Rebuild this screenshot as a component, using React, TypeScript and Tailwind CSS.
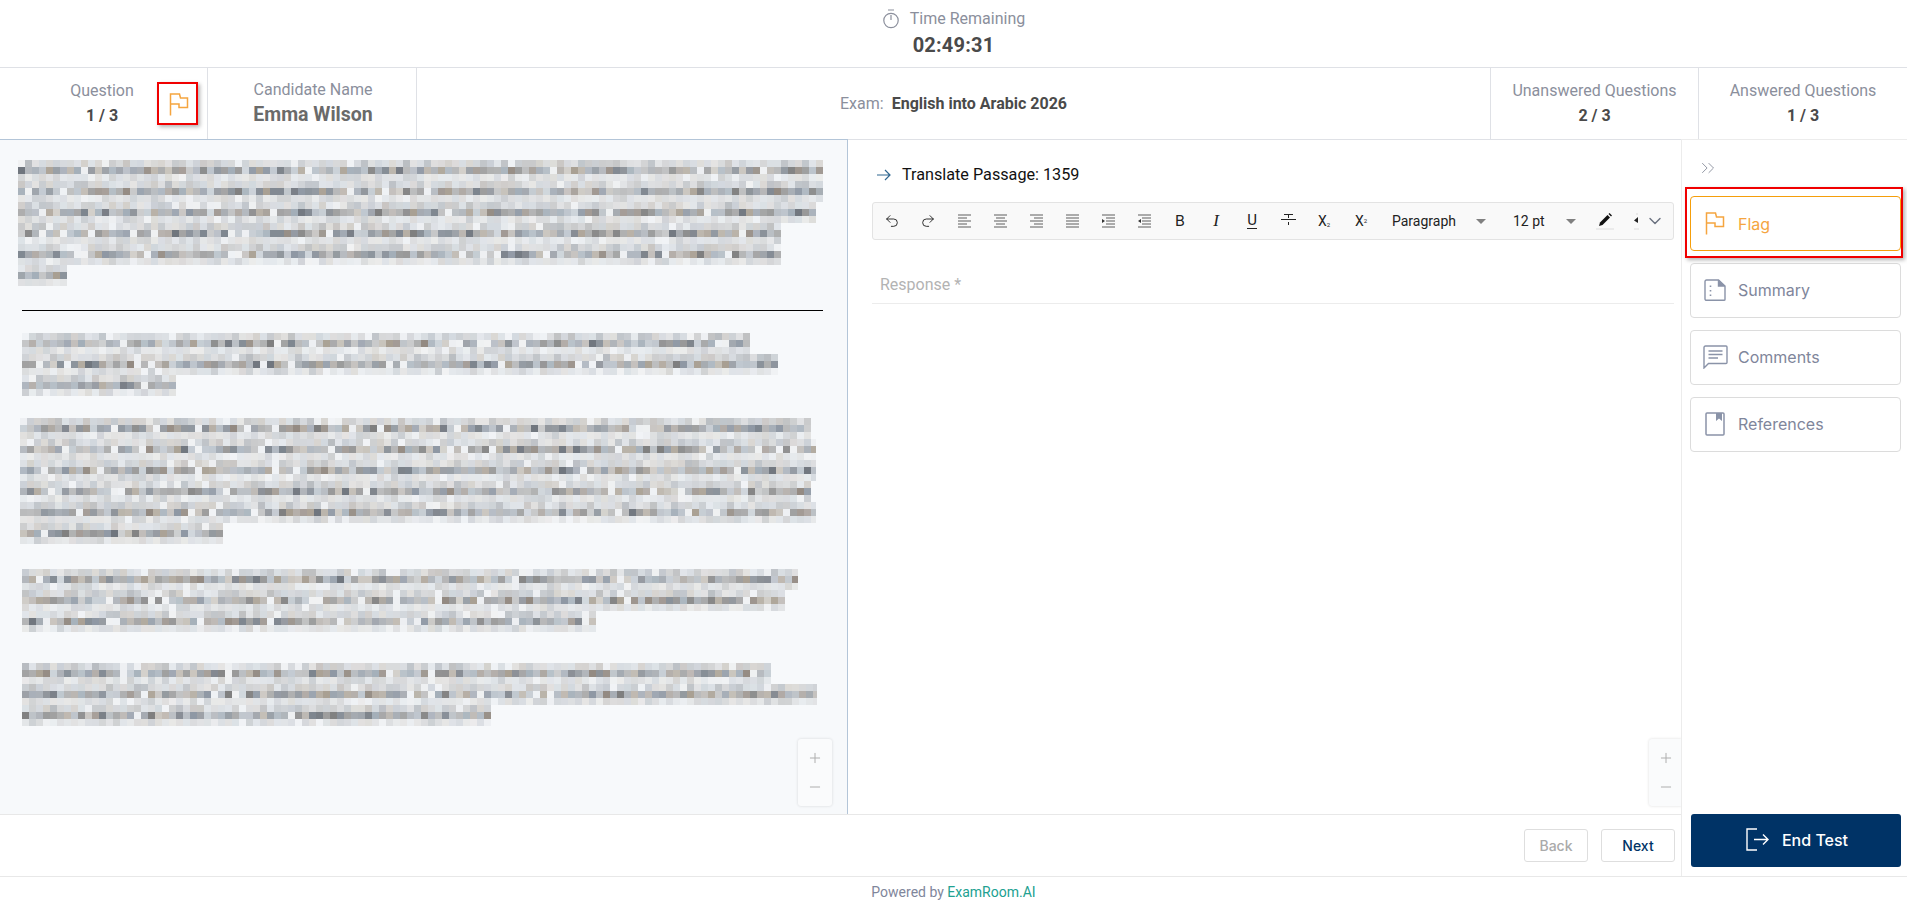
import { ChevronDown, ChevronsRight, Minus, Plus, Redo2, Undo2 } from "lucide-react";
import type { ReactNode } from "react";

const ROBOTO = "font-['Roboto',sans-serif]";
const INTER = "font-['Inter',sans-serif]";

const TINTS = ["#7f7f7f", "#8f98a4", "#a89f92", "#70767e", "#a3aeb8", "#938a82", "#999999", "#7d858e"];

// redacted passage text: a fixed mosaic, seeded so every render is the same
function Mosaic({ widths, seed, className }: { widths: number[]; seed: number; className?: string }) {
  let s = seed;
  const rand = () => {
    s = (s * 16807) % 2147483647;
    return (s - 1) / 2147483646;
  };
  const cell = 7;
  const rects: ReactNode[] = [];
  widths.forEach((w, line) => {
    const cols = Math.ceil(w / cell);
    for (let row = 0; row < 3; row++) {
      const base = row === 1 ? 0.78 : row === 0 ? 0.36 : 0.25;
      for (let c = 0; c < cols; c++) {
        const gap = rand() < 0.07;
        const op = gap ? 0.07 : base * (0.55 + rand() * 0.75);
        const fill = TINTS[Math.floor(rand() * TINTS.length)];
        rects.push(
          <rect key={`${line}-${row}-${c}`} x={c * cell} y={line * 21 + row * cell} width={cell} height={cell} fill={fill} fillOpacity={op} />,
        );
      }
    }
  });
  return (
    <svg className={className} width={Math.max(...widths)} height={widths.length * 21} shapeRendering="crispEdges">
      {rects}
    </svg>
  );
}

function FlagIcon({ className }: { className?: string }) {
  return (
    <svg className={className} viewBox="0 0 20 23" fill="none" stroke="currentColor" strokeWidth="1.5">
      <path d="M1.5 22.5V1H10.5L11.5 5H18.5V14.5H10V11H1.5" />
    </svg>
  );
}

function SummaryIcon() {
  return (
    <svg width="22" height="22" viewBox="0 0 22 22" fill="none" stroke="#8a93a8" strokeWidth="1.4">
      <path d="M2.5 1H14.5L21 7V20.5C21 21 20.5 21.3 20 21.3H2.5C1.6 21.3 1 20.7 1 20V2.5C1 1.6 1.6 1 2.5 1Z" />
      <path d="M14.5 1V7H21" fill="#8a93a8" />
      <path d="M6.5 6.5V8M6.5 11V12.5M6.5 15.5V17" strokeWidth="1.6" />
    </svg>
  );
}

function CommentsIcon() {
  return (
    <svg width="25" height="24" viewBox="0 0 25 24" fill="none" stroke="#8a93a8" strokeWidth="1.4">
      <path d="M1 23V2.5C1 1.6 1.6 1 2.5 1H23C23.6 1 24 1.4 24 2V17.5C24 18.1 23.6 18.5 23 18.5H5.5L1 23Z" />
      <path d="M5.5 6H19.5M5.5 9.5H19.5M5.5 13H15" />
    </svg>
  );
}

function ReferencesIcon() {
  return (
    <svg width="20" height="24" viewBox="0 0 20 24" fill="none" stroke="#8a93a8" strokeWidth="1.5">
      <rect x="1" y="1" width="18" height="22" rx="1" />
      <path d="M11 1H17V9L14 6.5L11 9Z" fill="#8a93a8" stroke="none" />
    </svg>
  );
}

function AlignBars({ lines }: { lines: string[] }) {
  return (
    <div className="flex flex-col gap-px">
      {lines.map((c, i) => (
        <div key={i} className={`h-[2px] bg-[#ababab] ${c}`} />
      ))}
    </div>
  );
}

function AlignIcon({ align }: { align: "left" | "center" | "right" | "full" }) {
  const side = align === "left" ? "mr-auto" : align === "right" ? "ml-auto" : align === "center" ? "mx-auto" : "";
  const short = align === "full" ? "w-[13px]" : `w-[9px] ${side}`;
  return (
    <div className="w-[13px]">
      <AlignBars lines={["w-[13px]", short, "w-[13px]", short, "w-[13px]"]} />
    </div>
  );
}

function IndentIcon({ out }: { out?: boolean }) {
  const s = "w-[9px] ml-auto";
  return (
    <div className="relative w-[13px]">
      <AlignBars lines={["w-[13px]", s, s, s, "w-[13px]"]} />
      <svg className="absolute left-0 top-[5px]" width="3" height="4" viewBox="0 0 3 4">
        <path d={out ? "M3 0V4L0 2Z" : "M0 0V4L3 2Z"} fill="#333" />
      </svg>
    </div>
  );
}

function Tool({ children }: { children: ReactNode }) {
  return <div className="flex h-full w-9 shrink-0 items-center justify-center text-[#222]">{children}</div>;
}

function Caret() {
  return <div className="h-0 w-0 border-x-[5px] border-t-[5px] border-x-transparent border-t-[#808080]" />;
}

function Toolbar() {
  return (
    <div className={`flex h-[38px] items-center overflow-hidden rounded-[3px] border border-[#e3e3e3] bg-[#f9f9f9] pl-px ${ROBOTO}`}>
      <Tool><Undo2 size={16} strokeWidth={1.4} /></Tool>
      <Tool><Redo2 size={16} strokeWidth={1.4} /></Tool>
      <Tool><AlignIcon align="left" /></Tool>
      <Tool><AlignIcon align="center" /></Tool>
      <Tool><AlignIcon align="right" /></Tool>
      <Tool><AlignIcon align="full" /></Tool>
      <Tool><IndentIcon /></Tool>
      <Tool><IndentIcon out /></Tool>
      <Tool><span className={`text-[15px] ${INTER}`}>B</span></Tool>
      <Tool><span className="font-['Liberation_Serif',serif] text-[17px] italic">I</span></Tool>
      <Tool><span className="border-b border-[#222] text-[15px] leading-[15px]">U</span></Tool>
      <Tool>
        <div className="relative flex h-[14px] w-[15px] flex-col items-center">
          <div className="h-px w-[9px] bg-[#222]" />
          <div className="h-[3px] w-px bg-[#222]" />
          <div className="mt-px h-px w-[15px] bg-[#222]" />
          <div className="mt-[2px] h-[3px] w-px bg-[#222]" />
        </div>
      </Tool>
      <Tool><span className="text-[14px]">X<sub className="text-[6px]">2</sub></span></Tool>
      <Tool><span className="pl-[2px] text-[14px]">X<sup className="text-[6px]">2</sup></span></Tool>
      <span className="ml-[14px] w-[84px] shrink-0 text-[14px] text-[#222]">Paragraph</span>
      <Caret />
      <span className="ml-[27px] w-[47px] shrink-0 whitespace-nowrap text-[14px] text-[#222]">12 pt</span>
      <div className="ml-[6px]"><Caret /></div>
      <div className="ml-[20px] flex w-[18px] flex-col items-center">
        <svg width="14" height="14" viewBox="0 0 14 14">
          <path d="M1 13L2 9.5L9.5 2L12 4.5L4.5 12Z" fill="#111" />
          <path d="M10.5 1L11.5 0L14 2.5L13 3.5Z" fill="#111" />
        </svg>
        <div className="mt-[1px] h-[2px] w-[18px] bg-[#ebebeb]" />
      </div>
      <div className="ml-[20px] flex w-[5px] flex-col items-start">
        <svg width="4" height="14" viewBox="0 0 4 14">
          <path d="M4 4L0 7.5L4 10Z" fill="#222" />
          <path d="M3 0.5V1.5" stroke="#bbb" />
        </svg>
        <div className="mt-[1px] h-[2px] w-[5px] bg-[#ebebeb]" />
      </div>
      <ChevronDown className="ml-[6px] shrink-0 text-[#6b7280]" size={20} strokeWidth={1.7} />
    </div>
  );
}

function Stat({ label, value, className }: { label: string; value: string; className: string }) {
  return (
    <div className={`flex flex-col items-center justify-center pb-[2px] ${className}`}>
      <span className="text-[16px] leading-[20px] text-[#8b8f9c]">{label}</span>
      <span className="mt-[5px] text-[16px] font-bold leading-[19px] text-[#4a4a4a]">{value}</span>
    </div>
  );
}

function ZoomControl({ className }: { className: string }) {
  return (
    <div className={`absolute flex h-[67px] flex-col items-center justify-around rounded-[3px] bg-[#fafbfc] py-[4px] text-[#aeaeae] shadow-[0_0_3px_rgba(0,0,0,0.14)] ${className}`}>
      <Plus size={16} strokeWidth={1.5} />
      <Minus size={16} strokeWidth={1.5} />
    </div>
  );
}

function SideButton({ icon, label, className }: { icon: ReactNode; label: string; className?: string }) {
  return (
    <button className={`flex h-[55px] w-[211px] items-center rounded-[4px] border border-[#dcdcdc] bg-white text-[16px] text-[#7f869b] ${className ?? ""}`}>
      <span className="flex w-[47px] shrink-0 justify-center pl-[1px]">{icon}</span>
      <span>{label}</span>
    </button>
  );
}

export default function App() {
  return (
    <div className={`flex h-[908px] w-[1907px] flex-col overflow-hidden bg-white ${ROBOTO}`}>
      {/* timer */}
      <div className="flex h-[68px] shrink-0 flex-col items-center border-b border-[#dfe1e6] pt-[8px]">
        <div className="flex h-[22px] items-center gap-[10px] text-[16px] text-[#8b8f9c]">
          <svg width="18" height="20" viewBox="0 0 18 20" fill="none" stroke="#8b8f9c" strokeWidth="1.2">
            <circle cx="9" cy="11.5" r="7.2" />
            <path d="M6 1H12M9 6V11" />
          </svg>
          <span>Time Remaining</span>
        </div>
        <span className="mt-[3px] text-[20px] font-bold leading-[24px] tracking-[0.2px] text-[#4a4a4a]">02:49:31</span>
      </div>

      {/* exam info */}
      <div className="flex h-[71px] shrink-0">
        <div className="flex w-[208px] shrink-0 items-center border-r border-[#dfe1e6] pl-[62px]">
          <Stat label="Question" value="1 / 3" className="w-[80px]" />
          <div className="relative ml-[15px] flex h-[43px] w-[41px] items-center justify-center border-[2px] border-[#f00000] pl-[3px] pt-[2px] text-[#f5a53f] shadow-[2px_2px_4px_rgba(0,0,0,0.3)]">
            <FlagIcon className="h-[23px] w-[20px]" />
          </div>
        </div>
        <div className="flex w-[209px] shrink-0 flex-col items-center justify-center border-r border-[#dfe1e6] pb-[2px] pl-[2px]">
          <span className="text-[16px] leading-[20px] text-[#8b8f9c]">Candidate Name</span>
          <span className="mt-[4px] text-[19.5px] font-bold leading-[21px] text-[#6a6a6a]">Emma Wilson</span>
        </div>
        <div className="flex flex-1 items-center justify-center text-[16px]">
          <span className="text-[#8b8f9c]">Exam:</span>
          <span className="ml-[8px] font-bold text-[#4a4a4a]">English into Arabic 2026</span>
        </div>
        <Stat label="Unanswered Questions" value="2 / 3" className="w-[209px] border-x border-[#dfe1e6]" />
        <Stat label="Answered Questions" value="1 / 3" className="w-[208px]" />
      </div>

      <div className="flex min-h-0 flex-1">
        <div className="flex min-w-0 flex-1 flex-col">
          <div className="flex min-h-0 flex-1 border-t border-[#dfe1e6]">
            {/* passage */}
            <div className="relative -mt-px w-[848px] shrink-0 border-r border-t border-[#b3c5d8] bg-[#f7f9fb] pl-[18px] pt-[20px]">
              <Mosaic seed={1234} widths={[805, 805, 798, 762, 763, 48]} />
              <div className="ml-[4px] mt-[24px] h-px w-[801px] bg-black" />
              <Mosaic seed={777} widths={[728, 756, 154]} className="ml-[4px] mt-[22px]" />
              <Mosaic seed={4242} widths={[789, 793, 796, 791, 792, 201]} className="ml-[2px] mt-[22px]" />
              <Mosaic seed={9001} widths={[776, 763, 574]} className="ml-[4px] mt-[25px]" />
              <Mosaic seed={31337} widths={[747, 795, 465]} className="ml-[4px] mt-[31px]" />
              <ZoomControl className="bottom-[8px] right-[15px] w-[34px]" />
            </div>

            {/* response */}
            <div className="relative min-w-0 flex-1 overflow-hidden pl-[24px] pr-[7px] pt-[24px]">
              <div className="flex h-[22px] items-center text-[16.2px] text-[#111]">
                <svg className="ml-[5px]" width="14" height="12" viewBox="0 0 14 12" fill="none" stroke="#2f6690" strokeWidth="1.2">
                  <path d="M0 6H13M8 1L13 6L8 11" />
                </svg>
                <span className="ml-[11px]">Translate Passage: 1359</span>
              </div>
              <div className="mt-[16px]">
                <Toolbar />
              </div>
              <div className="mt-[33px] h-[31px] border-b border-[#ececec] pl-[8px] text-[16px] leading-[24px] text-[#b3b3b3]">Response *</div>
              <ZoomControl className="-right-[2px] bottom-[8px] w-[34px]" />
            </div>
          </div>

          {/* nav */}
          <div className={`flex h-[62px] shrink-0 items-start justify-end gap-[13px] border-t border-[#e8e8e8] pr-[6px] pt-[14px] text-[14px] ${INTER}`}>
            <button className="h-[33px] w-[64px] rounded-[3px] border border-[#dedede] font-medium text-[#aaaaaa]">Back</button>
            <button className="h-[33px] w-[74px] rounded-[3px] border border-[#dedede] font-medium text-[#003366]">Next</button>
          </div>
        </div>

        {/* side panel */}
        <div className={`flex w-[226px] shrink-0 flex-col border-l border-t border-[#ececec] pl-[8px] ${INTER}`}>
          <div className="flex h-[56px] shrink-0 items-center pl-[7px] text-[#8a8f9c]">
            <ChevronsRight size={22} strokeWidth={1} />
          </div>
          <div className="flex flex-col gap-[12px]">
            <div className="relative">
              <SideButton icon={<FlagIcon className="h-[23px] w-[20px]" />} label="Flag" className="border-[#f59e0b] !text-[#f5a53f]" />
              <div className="pointer-events-none absolute -bottom-[7px] -left-[5px] -top-[9px] w-[218px] border-[2px] border-[#f00000] shadow-[2px_2px_4px_rgba(0,0,0,0.3)]" />
            </div>
            <SideButton icon={<SummaryIcon />} label="Summary" className="pb-[2px]" />
            <SideButton icon={<CommentsIcon />} label="Comments" className="pb-[2px]" />
            <SideButton icon={<ReferencesIcon />} label="References" className="pb-[2px]" />
          </div>
          <button className="mb-[9px] ml-px mt-auto flex h-[53px] w-[210px] items-center justify-center gap-[13px] rounded-[3px] bg-[#003366] pb-[2px] pl-[2px] text-[16px] font-medium text-white">
            <svg width="23" height="23" viewBox="0 0 23 23" fill="none" stroke="#ffffff" strokeWidth="1.4">
              <path d="M11 1H1V22H11" />
              <path d="M8 11.5H22M17 6.5L22 11.5L17 16.5" />
            </svg>
            End Test
          </button>
        </div>
      </div>

      <div className="flex h-[32px] shrink-0 items-center justify-center border-t border-[#e8e8e8] text-[14px] text-[#7f869b]">
        Powered by&nbsp;<span className="text-[#21a191]">ExamRoom.AI</span>
      </div>
    </div>
  );
}
